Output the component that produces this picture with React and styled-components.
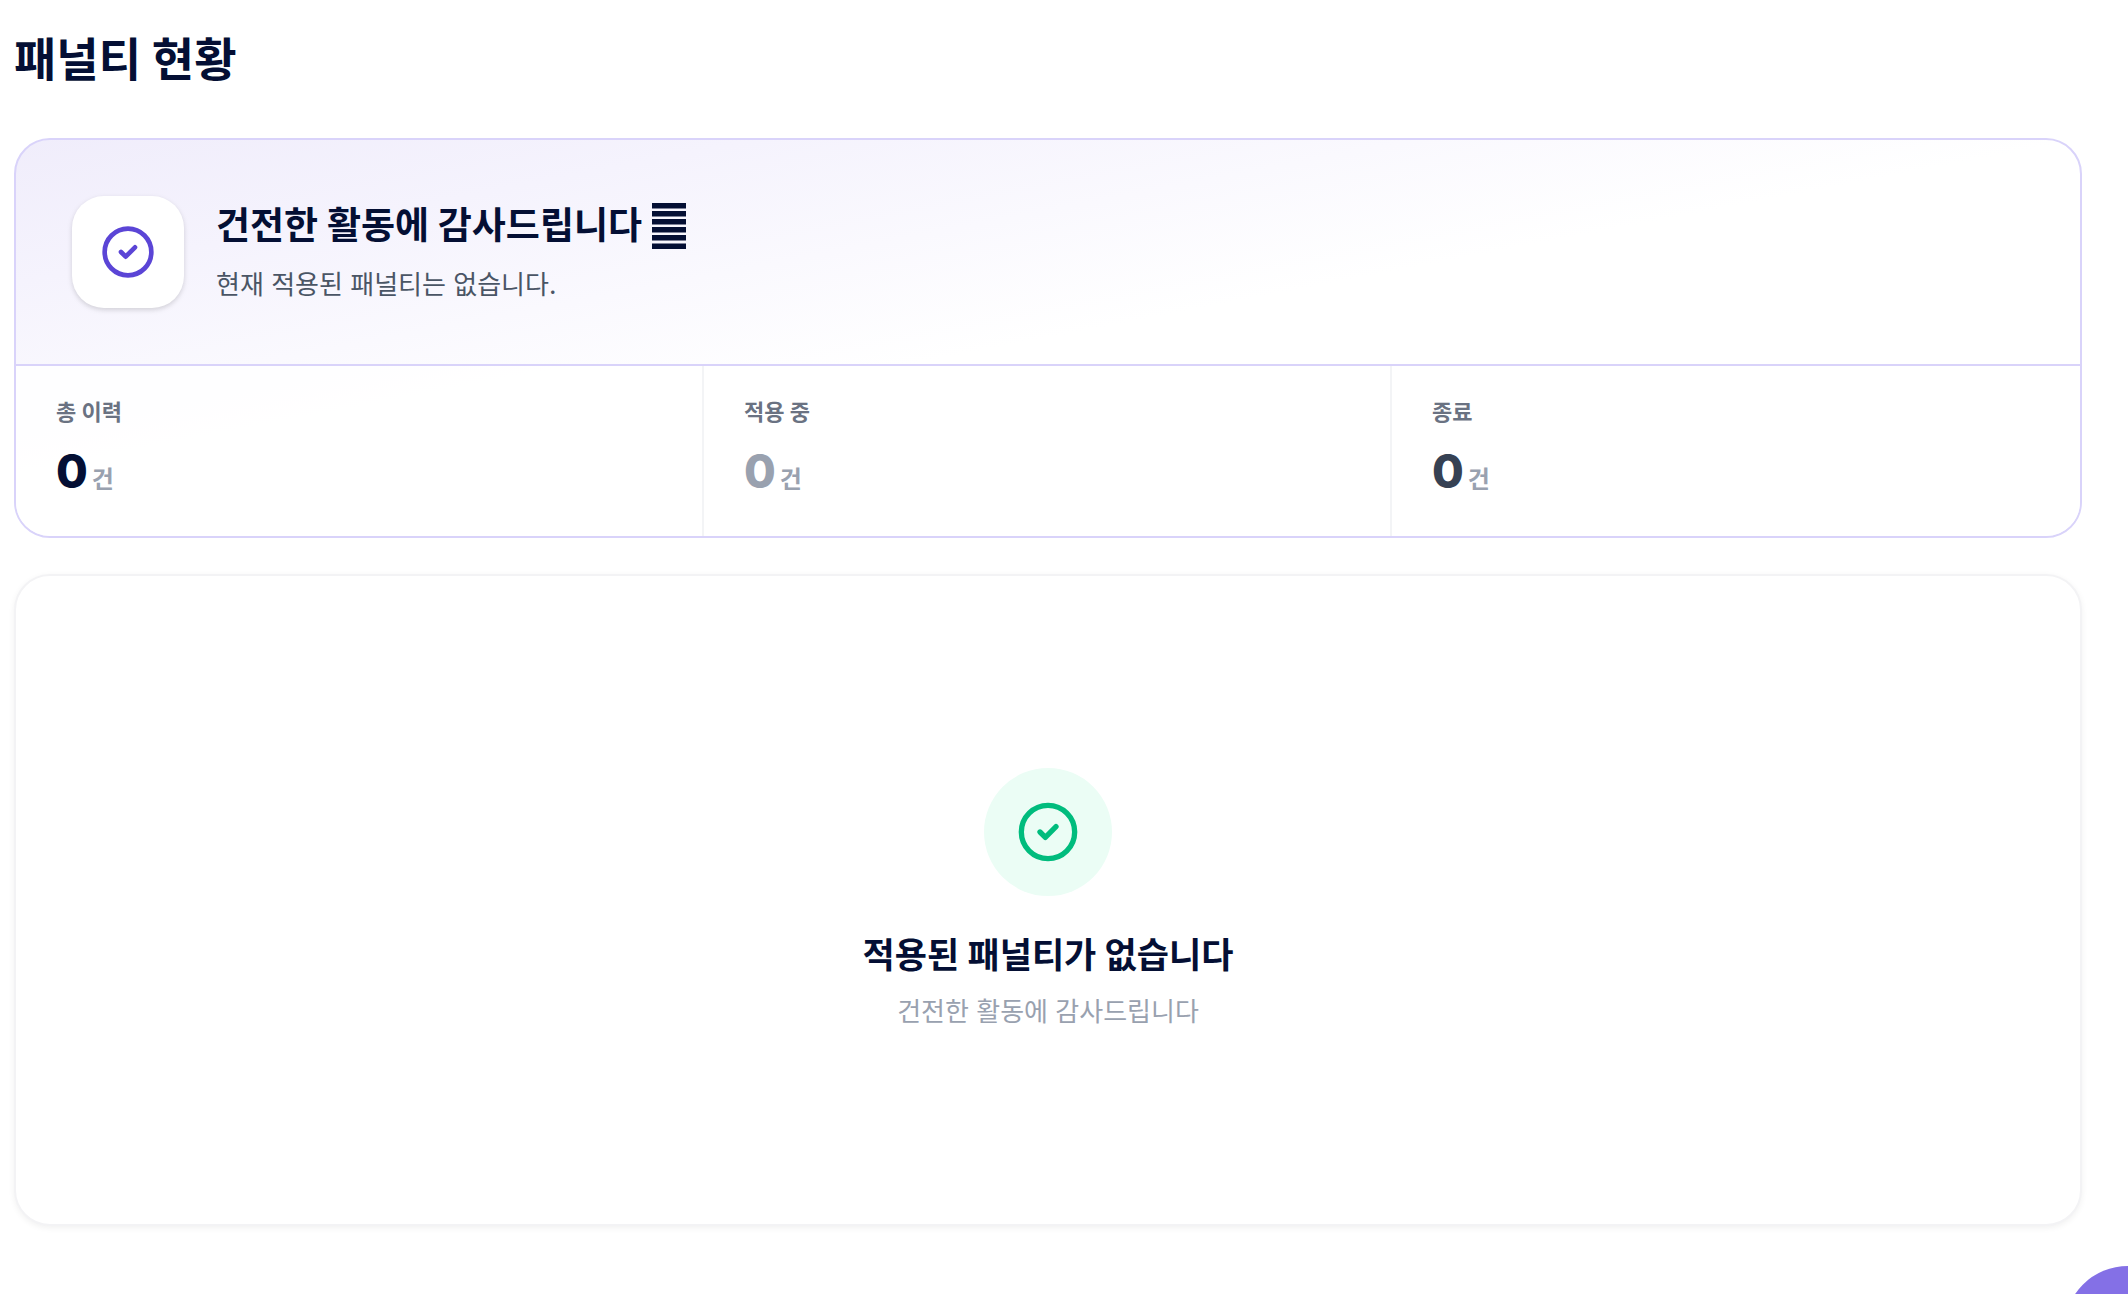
import React from "react";
import styled, { createGlobalStyle } from "styled-components";

const GlobalStyle = createGlobalStyle`
  *, *::before, *::after { box-sizing: border-box; }
  body {
    margin: 0;
    background: #fff;
    color: #040f34;
    font-family: Inter, "Noto Sans CJK KR", sans-serif;
  }
  h1, h2, h3, p, dl, dt, dd { margin: 0; }
`;

const Page = styled.main`
  min-height: 100vh;
  padding: 24px 46px 68px 14px;
  overflow: hidden;
`;

const PageTitle = styled.h1`
  margin-bottom: 44px;
  font-size: 46px;
  line-height: 70px;
  font-weight: 700;
`;

const SummaryCard = styled.section`
  border: 2px solid #d9d3fa;
  border-radius: 36px;
  overflow: hidden;
  background: linear-gradient(to bottom right, #f0edfb 0%, #f5f3fd 18%, #fff 50%);
`;

const SummaryHead = styled.header`
  display: flex;
  align-items: center;
  gap: 32px;
  padding: 56px;
`;

const IconTile = styled.div`
  display: grid;
  place-items: center;
  width: 112px;
  height: 112px;
  border-radius: 32px;
  background: #fff;
  color: #5b45d6;
  box-shadow: 0 2px 6px rgba(0, 0, 0, 0.08), 0 2px 4px rgba(0, 0, 0, 0.08);
`;

const SummaryTitle = styled.h2`
  display: flex;
  align-items: center;
  gap: 10px;
  font-size: 37px;
  line-height: 54px;
  font-weight: 700;
`;

const SummaryText = styled.p`
  margin-top: 12px;
  font-size: 26px;
  line-height: 40px;
  color: #4a5565;
`;

const Stats = styled.dl`
  display: grid;
  grid-template-columns: repeat(3, 1fr);
  border-top: 2px solid #d9d3fa;
  background: rgba(255, 255, 255, 0.8);
`;

const Stat = styled.div`
  padding: 32px 40px;
  border-right: 2px solid #f3f4f6;
  &:last-child { border-right: 0; }
`;

const StatLabel = styled.dt`
  font-size: 22px;
  line-height: 28px;
  font-weight: 700;
  color: #6a7282;
`;

const StatValue = styled.dd`
  margin-top: 12px;
  font-size: 46px;
  line-height: 66px;
  font-weight: 800;
  color: ${(p) => p.$color};
`;

const Unit = styled.span`
  margin-left: 4px;
  font-size: 24px;
  line-height: 24px;
  font-weight: 700;
  color: #99a1af;
`;

const EmptyCard = styled.section`
  display: flex;
  flex-direction: column;
  align-items: center;
  margin-top: 36px;
  padding: 192px 48px;
  border: 2px solid #f3f3f5;
  border-radius: 36px;
  background: #fff;
  box-shadow: 0 2px 6px rgba(0, 0, 0, 0.06);
`;

const EmptyIcon = styled.div`
  display: grid;
  place-items: center;
  width: 128px;
  height: 128px;
  border-radius: 50%;
  background: #ebfdf5;
  color: #00bc7d;
`;

const EmptyTitle = styled.h3`
  margin-top: 32px;
  font-size: 35px;
  line-height: 54px;
  font-weight: 700;
`;

const EmptyText = styled.p`
  margin-top: 10px;
  font-size: 26px;
  line-height: 40px;
  color: #99a1af;
`;

const FloatingButton = styled.button`
  position: fixed;
  left: calc(100% - 64px);
  top: calc(100% - 28px);
  width: 128px;
  height: 128px;
  padding: 0;
  border: 0;
  border-radius: 50%;
  background: #8470e6;
`;

const CheckCircle = ({ size }) => (
  <svg width={size} height={size} viewBox="0 0 24 24" fill="none" stroke="currentColor" strokeWidth="2" strokeLinecap="round" strokeLinejoin="round" aria-hidden="true">
    <circle cx="12" cy="12" r="10" />
    <path d="m9 12 2 2 4-4" />
  </svg>
);

const StripeMark = () => (
  <svg width="34" height="46" viewBox="0 0 34 46" fill="currentColor" aria-hidden="true">
    {[0, 8, 16, 24, 32].map((y) => <rect key={y} y={y} width="34" height="5.5" />)}
    <rect y="40.5" width="34" height="5.5" />
  </svg>
);

const stats = [
  { label: "총 이력", value: 0, color: "#040f34" },
  { label: "적용 중", value: 0, color: "#99a1af" },
  { label: "종료", value: 0, color: "#364153" },
];

export default function App() {
  return (
    <>
      <GlobalStyle />
      <Page>
        <PageTitle>패널티 현황</PageTitle>
        <SummaryCard>
          <SummaryHead>
            <IconTile><CheckCircle size={56} /></IconTile>
            <div>
              <SummaryTitle>건전한 활동에 감사드립니다<StripeMark /></SummaryTitle>
              <SummaryText>현재 적용된 패널티는 없습니다.</SummaryText>
            </div>
          </SummaryHead>
          <Stats>
            {stats.map((s) => (
              <Stat key={s.label}>
                <StatLabel>{s.label}</StatLabel>
                <StatValue $color={s.color}>{s.value}<Unit>건</Unit></StatValue>
              </Stat>
            ))}
          </Stats>
        </SummaryCard>
        <EmptyCard>
          <EmptyIcon><CheckCircle size={64} /></EmptyIcon>
          <EmptyTitle>적용된 패널티가 없습니다</EmptyTitle>
          <EmptyText>건전한 활동에 감사드립니다</EmptyText>
        </EmptyCard>
        <FloatingButton type="button" aria-label="문의하기" />
      </Page>
    </>
  );
}
